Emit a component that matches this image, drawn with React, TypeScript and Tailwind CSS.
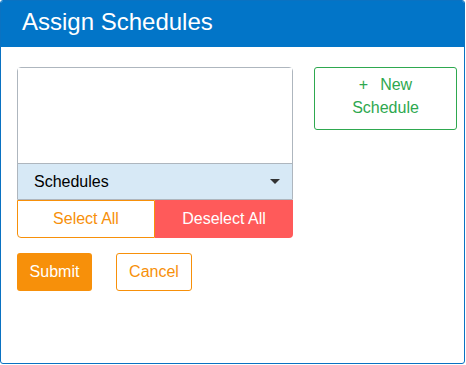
import { useState } from "react";

const font = { fontFamily: '"Liberation Sans", Arial, sans-serif' };

export default function App() {
  const [schedule] = useState("Schedules");

  return (
    <div className="bg-white w-[466px] h-[365px]" style={font}>
      <div className="w-[465px] h-[364px] border border-[#0a72c2] rounded-[3px] flex flex-col overflow-hidden">
        <div className="h-[46px] shrink-0 bg-[#0275c8] text-white text-[24px] leading-[28px] pl-[21px] pt-[7px]">
          Assign Schedules
        </div>

        <div className="flex-1 pl-[16px] pt-[20px]">
          <div className="flex items-start gap-[21px]">
            <div className="w-[276px] flex flex-col">
              <div className="border border-[#aeb6be] rounded-t-[4px] flex flex-col">
                <div className="h-[95px] bg-white" />
                <div className="h-[36px] bg-[#d7e9f6] border-t border-[#aeb6be] flex items-center justify-between pl-[16px] pr-[12px] text-[16px] text-black">
                  <span>{schedule}</span>
                  <span className="w-0 h-0 border-l-[5px] border-r-[5px] border-t-[5px] border-l-transparent border-r-transparent border-t-[#333]" />
                </div>
              </div>
              <div className="flex h-[38px] text-[16px]">
                <button className="w-[138px] border border-[#f7900a] text-[#f7900a] bg-white rounded-bl-[4px]">
                  Select All
                </button>
                <button className="flex-1 bg-[#ff5a5a] text-white rounded-br-[4px]">
                  Deselect All
                </button>
              </div>
            </div>

            <button className="w-[143px] h-[63px] border border-[#2ea84f] rounded-[3px] text-[#2ea84f] text-[16px] leading-[23px] pt-[5px] pb-[5px] flex flex-col items-center">
              <span>
                <span className="mr-[12px]">+</span>New
              </span>
              <span>Schedule</span>
            </button>
          </div>

          <div className="flex gap-[24px] mt-[15px]">
            <button className="w-[75px] h-[38px] bg-[#f7900a] text-white text-[16px] rounded-[3px]">
              Submit
            </button>
            <button className="w-[76px] h-[38px] border border-[#f7900a] text-[#f7900a] text-[16px] rounded-[3px] bg-white">
              Cancel
            </button>
          </div>
        </div>
      </div>
    </div>
  );
}
